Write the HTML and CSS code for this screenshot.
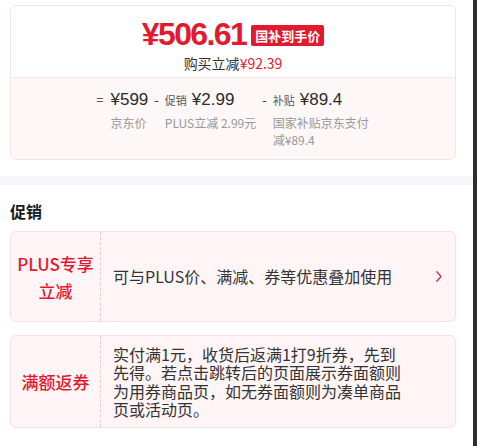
FILE: index.html
```html
<!DOCTYPE html>
<html lang="zh-CN">
<head>
<meta charset="utf-8">
<title>价格与促销</title>
<link rel="stylesheet" href="styles.css">
</head>
<body>
<div class="page">
  <main class="content">
    <section class="price-card">
      <div class="price-top">
        <div class="price-row">
          <span class="price">¥506.61</span>
          <span class="badge">国补到手价</span>
        </div>
        <div class="saving">购买立减<span class="red">¥92.39</span></div>
      </div>
      <div class="breakdown">
        <div class="col">
          <span class="op op-eq">=</span>
          <div class="col-body">
            <div class="val-line"><span class="val">¥599</span></div>
            <div class="desc">京东价</div>
          </div>
        </div>
        <div class="col">
          <span class="op">-</span>
          <div class="col-body">
            <div class="val-line"><span class="tag">促销</span><span class="val">¥2.99</span></div>
            <div class="desc">PLUS立减 2.99元</div>
          </div>
        </div>
        <div class="col">
          <span class="op">-</span>
          <div class="col-body col-body-narrow">
            <div class="val-line"><span class="tag">补贴</span><span class="val">¥89.4</span></div>
            <div class="desc">国家补贴京东支付减¥89.4</div>
          </div>
        </div>
      </div>
    </section>

    <div class="band"></div>

    <section class="promo">
      <h2 class="promo-title">促销</h2>
      <div class="promo-list">
        <div class="promo-card">
          <div class="promo-label">PLUS专享<br>立减</div>
          <div class="promo-body">
            <p class="promo-text">可与PLUS价、满减、券等优惠叠加使用</p>
            <svg class="chev" width="6" height="11" viewBox="0 0 6 11" aria-hidden="true"><path d="M0.8 0.8 L5 5.5 L0.8 10.2" fill="none" stroke="#c9354c" stroke-width="1.4" stroke-linecap="round" stroke-linejoin="round"/></svg>
          </div>
        </div>
        <div class="promo-card">
          <div class="promo-label">满额返券</div>
          <div class="promo-body">
            <p class="promo-text">实付满1元，收货后返满1打9折券，先到先得。若点击跳转后的页面展示券面额则为用券商品页，如无券面额则为凑单商品页或活动页。</p>
            <span class="chev chev-spacer"></span>
          </div>
        </div>
      </div>
    </section>
  </main>
  <div class="scroll-strip"></div>
</div>
</body>
</html>
```
FILE: styles.css
```css
* { box-sizing: border-box; }
html, body { margin: 0; padding: 0; background: #fff; }
body {
  font-family: "Noto Sans CJK SC", "Noto Sans", sans-serif;
  color: #333;
  width: 477px;
  height: 446px;
  overflow: hidden;
}
.page { display: flex; height: 446px; }
.content { flex: 1; min-width: 0; }
.scroll-strip { width: 4px; background: #2e2e2e; }

/* price card */
.price-card {
  margin: 5px 17px 0 10px;
  border: 1px solid #f0e6e7;
  border-radius: 6px;
  overflow: hidden;
  background: #fff;
}
.price-top { padding: 11px 0 3px; text-align: center; }
.price-row {
  display: flex;
  justify-content: center;
  align-items: center;
  height: 34px;
  gap: 5px;
}
.price {
  color: #e3192f;
  font-family: "Liberation Sans", Arial, sans-serif;
  font-weight: 700;
  font-size: 32px;
  line-height: 34px;
  letter-spacing: -1.6px;
}
.badge {
  background: #e3192f;
  color: #fff;
  font-size: 13px;
  font-weight: 700;
  line-height: 21px;
  height: 21px;
  padding: 0 4px;
  border-radius: 2px;
  margin-top: 2px;
}
.saving { font-size: 14px; line-height: 22px; color: #333; margin-top: 1px; }
.red { color: #e3192f; }

.breakdown {
  display: flex;
  justify-content: center;
  align-items: flex-start;
  gap: 6px;
  background: #fdf7f7;
  border-top: 1px solid #f5eaeb;
  padding: 11px 0 11px;
}
.col { display: flex; align-items: flex-start; }
.op { font-size: 13px; line-height: 22px; color: #333; margin-right: 6px; }
.op-eq { margin-right: 7px; }
.col-body { display: flex; flex-direction: column; }
.col-body-narrow { width: 97px; }
.val-line { display: flex; align-items: baseline; line-height: 22px; height: 22px; }
.tag { font-size: 11px; color: #555; margin-right: 5px; }
.val { font-family: "Liberation Sans", Arial, sans-serif; font-size: 17px; color: #2b2b2b; }
.desc { font-size: 12px; line-height: 17px; color: #999; margin-top: 3px; }

.band { height: 9px; background: #f6f7fb; margin-top: 16px; }

/* promo */
.promo { padding: 14px 17px 0 10px; }
.promo-title {
  margin: 0;
  font-size: 16px;
  font-weight: 700;
  line-height: 24px;
  color: #1a1a1a;
}
.promo-list { display: flex; flex-direction: column; gap: 13px; margin-top: 8px; }
.promo-card {
  display: flex;
  min-height: 91px;
  background: #fff5f6;
  border: 1px solid #f6e0e4;
  border-radius: 6px;
}
.promo-label {
  width: 90px;
  flex: none;
  display: flex;
  align-items: center;
  justify-content: center;
  text-align: center;
  border-right: 1px dashed #ebc9ce;
  color: #e3192f;
  font-size: 17px;
  font-weight: 500;
  line-height: 27px;
}
.promo-body {
  flex: 1;
  display: flex;
  align-items: center;
  padding: 9px 13px 9px 12px;
}
.promo-text {
  flex: 1;
  margin: 0;
  font-size: 16px;
  line-height: 18.3px;
  color: #333;
}
.chev { flex: none; width: 6px; height: 11px; margin-left: 25px; }
.chev-spacer { display: block; }
```
